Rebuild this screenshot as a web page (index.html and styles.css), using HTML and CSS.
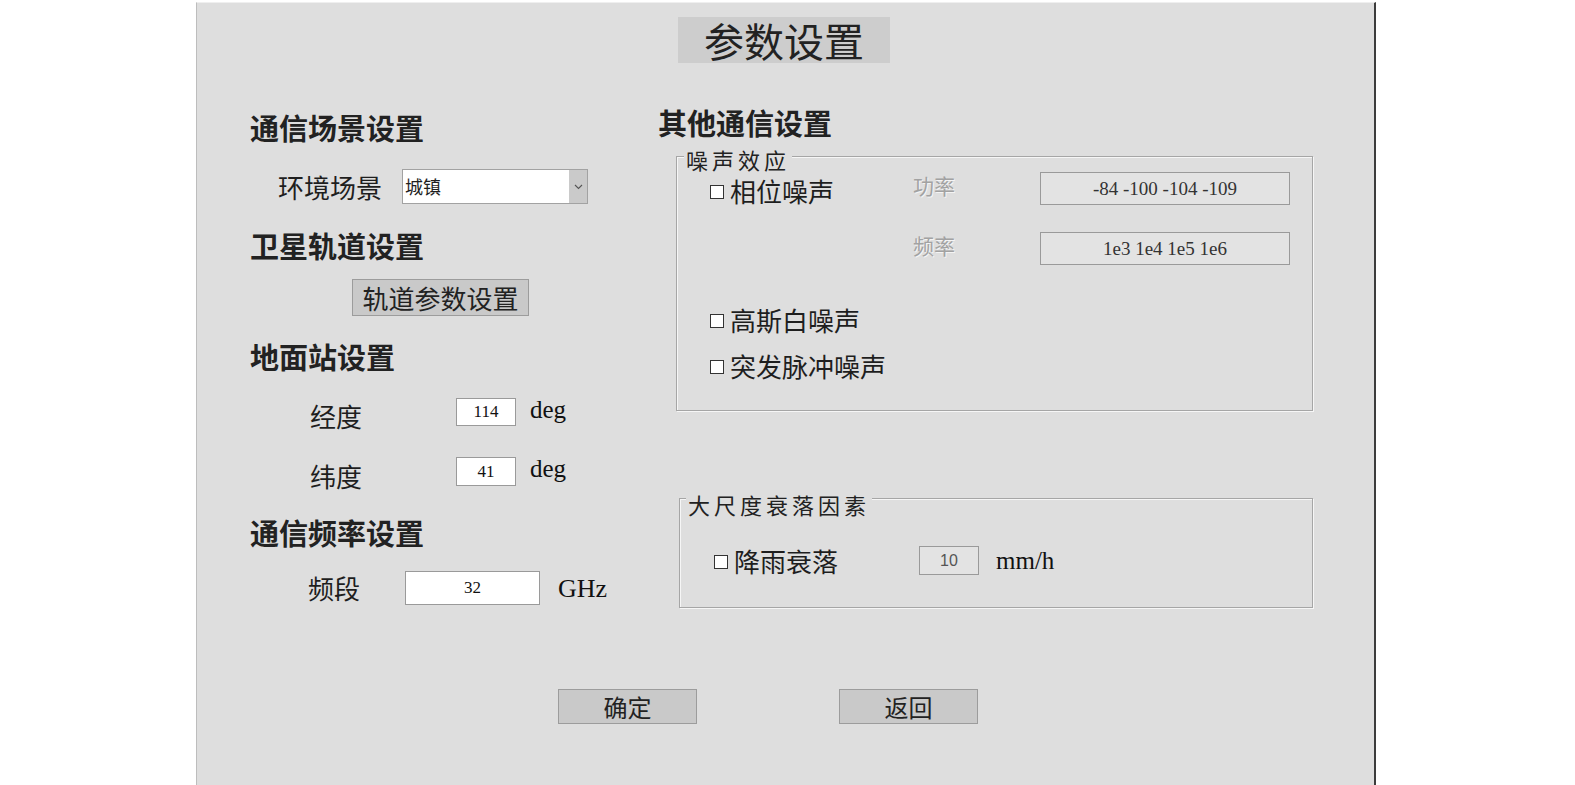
FILE: index.html
```html
<!DOCTYPE html>
<html>

<head>
  <meta charset="utf-8">
  <link rel="stylesheet" href="styles.css">
</head>

<body>
  <div class="panel">
    <div class="title-row">
      <div class="title">参数设置</div>
    </div>

    <div class="columns">
      <!-- left: scene / orbit / station / frequency -->
      <div class="col-left">
        <div class="heading h1">通信场景设置</div>
        <div class="row scene-row">
          <span class="label scene-label">环境场景</span>
          <div class="select">
            <span class="select-text">城镇</span>
            <span class="select-arrow">
              <svg width="9" height="6" viewBox="0 0 9 6">
                <polyline points="1,1 4.5,4.5 8,1" fill="none" stroke="#555" stroke-width="1.1" />
              </svg>
            </span>
          </div>
        </div>

        <div class="heading h2">卫星轨道设置</div>
        <div class="row orbit-row">
          <button class="btn orbit-btn">轨道参数设置</button>
        </div>

        <div class="heading h3">地面站设置</div>
        <div class="row lon-row">
          <span class="label coord-label">经度</span>
          <input class="field small-field" value="114">
          <span class="unit">deg</span>
        </div>
        <div class="row lat-row">
          <span class="label coord-label">纬度</span>
          <input class="field small-field lat-field" value="41">
          <span class="unit">deg</span>
        </div>

        <div class="heading h4">通信频率设置</div>
        <div class="row band-row">
          <span class="label band-label">频段</span>
          <input class="field band-field" value="32">
          <span class="unit ghz">GHz</span>
        </div>
      </div>

      <!-- right: other settings -->
      <div class="col-right">
        <div class="heading other-heading">其他通信设置</div>

        <div class="group noise-group">
          <span class="group-title">噪声效应</span>
          <div class="noise-row">
            <span class="check first-check"><span class="box"></span>相位噪声</span>
            <span class="dim-label">功率</span>
            <input class="field wide-field" value="-84 -100 -104 -109" disabled>
          </div>
          <div class="noise-row freq-row">
            <span></span>
            <span class="dim-label">频率</span>
            <input class="field wide-field" value="1e3 1e4 1e5 1e6" disabled>
          </div>
          <div class="noise-row gauss-row">
            <span class="check"><span class="box"></span>高斯白噪声</span>
          </div>
          <div class="noise-row burst-row">
            <span class="check"><span class="box"></span>突发脉冲噪声</span>
          </div>
        </div>

        <div class="group fade-group">
          <span class="group-title">大尺度衰落因素</span>
          <div class="fade-row">
            <span class="check rain-check"><span class="box"></span>降雨衰落</span>
            <input class="field rain-field" value="10" disabled>
            <span class="unit mmh">mm/h</span>
          </div>
        </div>
      </div>
    </div>

    <div class="actions">
      <button class="btn action-btn">确定</button>
      <button class="btn action-btn">返回</button>
    </div>
  </div>
</body>

</html>
```

FILE: styles.css
```css
body {
  margin: 0;
  overflow: hidden;
  background-color: #ffffff;
  font-family: "Noto Sans CJK SC", sans-serif;
  color: #1e1e1e;
}

.panel {
  margin-left: 196px;
  margin-top: 2px;
  width: 1180px;
  height: 783px;
  box-sizing: border-box;
  background-color: #dedede;
  border-top: 1px solid #efefef;
  border-left: 1px solid #bdbdbd;
  border-right: 2px solid #3c3c3c;
}

.title-row {
  padding-top: 14px;
  padding-left: 481px;
}

.title {
  width: 212px;
  height: 46px;
  line-height: 46px;
  text-align: center;
  font-size: 40px;
  background-color: #cdcdcd;
  color: #222;
}

.columns {
  display: flex;
  padding-left: 53px;
}

.col-left {
  width: 408px;
  padding-top: 46px;
}

.col-right {
  padding-top: 41px;
}

.heading {
  font-size: 29px;
  font-weight: bold;
  line-height: 36px;
  height: 36px;
  color: #222;
}

.h2 { margin-top: 23px; }
.h3 { margin-top: 22px; }
.h4 { margin-top: 28px; }

.row {
  display: flex;
  align-items: center;
}

.label {
  font-size: 26px;
  line-height: 30px;
}

.scene-row {
  margin-top: 24px;
  height: 35px;
}

.scene-label {
  margin-left: 28px;
  width: 124px;
}

.select {
  width: 186px;
  height: 35px;
  box-sizing: border-box;
  display: flex;
  background-color: #fff;
  border: 1px solid #a2a2a2;
}

.select-text {
  flex: 1;
  font-size: 18px;
  line-height: 33px;
  padding-left: 2px;
}

.select-arrow {
  width: 18px;
  display: flex;
  align-items: center;
  justify-content: center;
  background-color: #cacaca;
}

.btn {
  font-family: "Noto Sans CJK SC", sans-serif;
  color: #222;
  background-color: #c9c9c9;
  border: 1px solid #9c9c9c;
  padding: 0;
  box-sizing: border-box;
}

.orbit-row {
  margin-top: 16px;
  height: 37px;
}

.orbit-btn {
  margin-left: 102px;
  width: 177px;
  height: 37px;
  font-size: 26px;
  line-height: 33px;
}

.field {
  box-sizing: border-box;
  border: 1px solid #9a9a9a;
  background-color: #fff;
  text-align: center;
  font-family: "Liberation Serif", serif;
  font-size: 17px;
  color: #111;
  padding: 0;
  outline: none;
}

.lon-row {
  margin-top: 24px;
  height: 28px;
}

.lat-row {
  margin-top: 31px;
  height: 29px;
}

.coord-label {
  margin-left: 60px;
  width: 146px;
  margin-top: 8px;
}

.small-field {
  width: 60px;
  height: 28px;
}

.lat-field {
  height: 29px;
}

.unit {
  font-family: "Liberation Serif", serif;
  font-size: 25px;
  line-height: 29px;
  margin-left: 14px;
  margin-top: -6px;
  color: #111;
}

.band-row {
  margin-top: 21px;
  height: 34px;
}

.band-label {
  margin-left: 58px;
  width: 97px;
}

.band-field {
  width: 135px;
  height: 34px;
}

.ghz {
  font-size: 26px;
  margin-left: 18px;
  margin-top: 0;
}

.group {
  position: relative;
  border: 1px solid #a6a6a6;
  box-shadow: inset 1px 1px 0 #f6f6f6, 1px 1px 0 #f6f6f6;
}

.group-title {
  position: absolute;
  padding: 0 2px;
  font-size: 22px;
  line-height: 22px;
  letter-spacing: 4px;
  background-color: #dedede;
  color: #222;
}

.noise-group {
  margin-top: 16px;
  margin-left: 18px;
  width: 637px;
  box-sizing: border-box;
  padding: 15px 0 28px 33px;
}

.noise-group .group-title {
  top: -9px;
  left: 7px;
}

.noise-row {
  display: grid;
  grid-template-columns: 203px 127px 250px;
  grid-template-rows: 33px;
  align-items: center;
  height: 33px;
}

.freq-row { margin-top: 27px; }
.gauss-row { margin-top: 38px; }
.burst-row { margin-top: 13px; }

.check {
  display: flex;
  align-items: center;
  font-size: 26px;
  line-height: 30px;
  white-space: nowrap;
}

.first-check {
  margin-top: 4px;
}

.box {
  width: 14px;
  height: 14px;
  box-sizing: border-box;
  border: 1px solid #333;
  background-color: #fff;
  margin-right: 6px;
  margin-top: 3px;
}

.dim-label {
  align-self: start;
  font-size: 21px;
  line-height: 24px;
  margin-top: 1px;
  color: #a2a2a2;
  text-shadow: 1px 1px 0 #f4f4f4;
}

.wide-field {
  width: 250px;
  height: 33px;
  font-size: 19px;
  background-color: #e3e3e3;
  color: #333;
}

.fade-group {
  margin-top: 87px;
  margin-left: 21px;
  width: 634px;
  box-sizing: border-box;
  padding: 47px 0 32px 34px;
}

.fade-group .group-title {
  top: -6px;
  left: 6px;
}

.fade-row {
  display: flex;
  align-items: center;
  height: 29px;
}

.rain-check {
  width: 205px;
}

.rain-field {
  width: 60px;
  height: 29px;
  font-family: "Liberation Sans", sans-serif;
  font-size: 16px;
  background-color: #e3e3e3;
  color: #555;
}

.mmh {
  margin-left: 17px;
  margin-top: 0;
}

.actions {
  display: flex;
  gap: 142px;
  padding-left: 361px;
  margin-top: 81px;
}

.action-btn {
  width: 139px;
  height: 35px;
  font-size: 24px;
  line-height: 31px;
}
```
